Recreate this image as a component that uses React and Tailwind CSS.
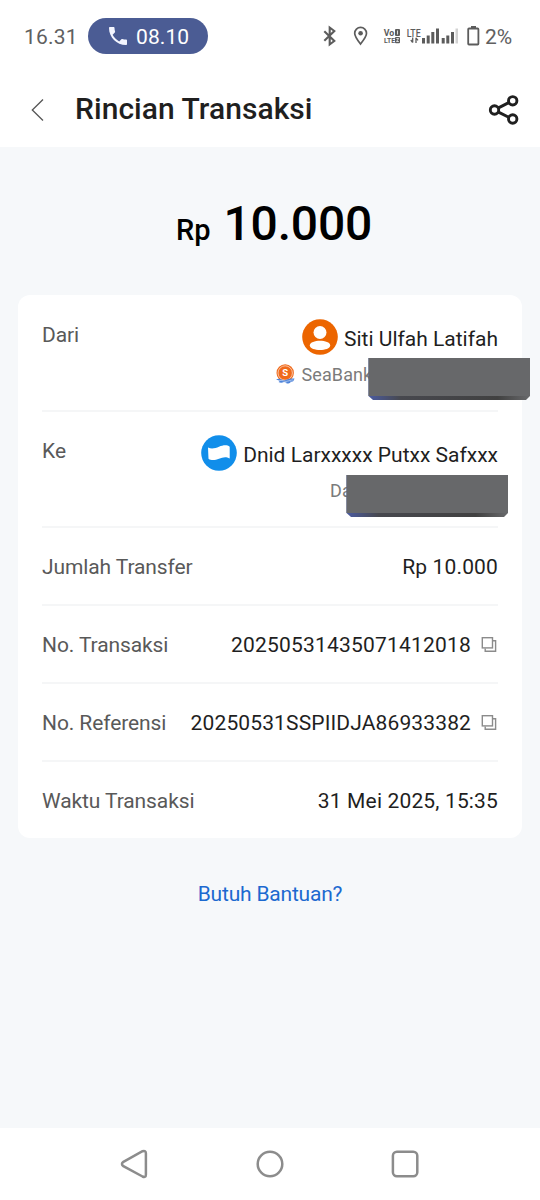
import React from "react";

const copyRows = [
  { label: "No. Transaksi", value: "20250531435071412018", tracking: "tracking-[0.2px]" },
  { label: "No. Referensi", value: "20250531SSPIIDJA86933382", tracking: "tracking-[0.13px]" },
];

function StatusIcons() {
  return (
    <svg width="160" height="28" viewBox="320 22 160 28" fill="none">
      {/* Bluetooth */}
      <path d="M324.300 31.200L334.300 41L329.700 44.500V27.500L334.300 31L324.300 40.800" stroke="#5c5c5c" strokeWidth="2.100" />
      {/* Location */}
      <path d="M360.500 44C357 39.500 354.700 36.500 354.700 33.200A5.900 5.900 0 0 1 366.500 33.200C366.500 36.500 364 39.500 360.500 44Z" stroke="#5c5c5c" strokeWidth="1.700" />
      <circle cx="360.600" cy="33.200" r="2.300" fill="#5c5c5c" />
      {/* VoLTE */}
      <g fill="#5c5c5c" fontFamily="Roboto, sans-serif" fontWeight="700">
        <text x="383.800" y="35.500" fontSize="8.500" textLength="10.500" lengthAdjust="spacingAndGlyphs">Vo</text>
        <text x="384" y="43.200" fontSize="8" textLength="11" lengthAdjust="spacingAndGlyphs">LTE</text>
        <rect x="395" y="29" width="5" height="7" rx="1" />
        <rect x="395" y="37" width="5" height="6.300" rx="1" />
        <text x="406.700" y="36.500" fontSize="10" fontWeight="500" textLength="14" lengthAdjust="spacingAndGlyphs">LTE</text>
      </g>
      <path d="M397.500 30.500V34.500M396.400 38.500H398.600L396.600 41.500H398.800" stroke="#fff" strokeWidth=".8" />
      <path d="M412.700 42.500V37.500M410.800 40L412.700 42.500M416 43V37.800M416 37.800L418 40.300" stroke="#5c5c5c" strokeWidth="1.300" />
      {/* Signal */}
      <path d="M422 38H425V43.500H422ZM426.700 35.500H429.700V43.500H426.700ZM431.300 32H434.300V43.500H431.300ZM436 28.500H439V43.500H436ZM441.700 38H444.700V43.500H441.700ZM446.300 35.500H449.300V43.500H446.300ZM451 32H454V43.500H451Z" fill="#5c5c5c" />
      <path d="M455.500 28.500H458V43.500H455.500Z" fill="#d2d2d2" />
      {/* Battery */}
      <path d="M471 26H476V28H471Z" fill="#5c5c5c" />
      <rect x="468.200" y="28.500" width="10.200" height="16" rx=".8" stroke="#5c5c5c" strokeWidth="1.800" />
    </svg>
  );
}

function CopyIcon() {
  return (
    <svg className="ml-[10px] mr-px shrink-0 -mt-[2px]" width="16" height="16" viewBox="0 0 16 16" fill="none" stroke="#8b8b8b" strokeWidth="1.400">
      <rect x="1.300" y=".7" width="10.200" height="10.200" />
      <path d="M12 3.700H14.600V14.300H4.200V11.500" />
    </svg>
  );
}

function UserIcon() {
  return (
    <svg width="36" height="36" viewBox="0 0 36 36">
      <circle cx="18" cy="18" r="17.800" fill="#ec6500" />
      <circle cx="18" cy="13.500" r="6.500" fill="#fff" />
      <path d="M7.800 26.500C8 20.300 28 20.300 28.200 26.500C28 32.500 8 32.500 7.800 26.500Z" fill="#fff" />
    </svg>
  );
}

function DanaIcon() {
  return (
    <svg width="36" height="36" viewBox="0 0 36 36">
      <circle cx="18" cy="18" r="17.800" fill="#118eea" />
      <path d="M7 12.500C11 14.500 14.500 13 18 11.700C22 10.200 26 9.500 28.700 11.800V23.500C24.500 21 21.500 22.500 18 23.800C14.500 25 10.500 26 7.500 23.700Z" fill="#fff" />
    </svg>
  );
}

function SeaBankIcon() {
  return (
    <svg className="mr-[7px]" width="19" height="20" viewBox="0 0 19 20">
      <circle cx="9.200" cy="9" r="8.700" fill="#f06a1b" />
      <circle cx="9.200" cy="9" r="7.200" fill="none" stroke="#fff" strokeWidth=".6" />
      <text x="9.200" y="12.300" textAnchor="middle" fill="#fff" fontFamily="Roboto, sans-serif" fontWeight="700" fontSize="9.500">S</text>
      <path d="M0 15.500Q3 14 5.500 15.500T11 15.500T18.500 14.500L17.500 17Q16 18 14.500 17.500Q15 19.500 10.500 19.500Q11 18 8 18Q5 19.500 2.500 18Q4 17.500 3 16.500Z" fill="#4d83d9" />
      <path d="M3 16.800Q5 15.800 7.500 16.900T13 16.800T17.500 16" fill="none" stroke="#fff" strokeWidth=".5" />
    </svg>
  );
}

function Redacted({ className }) {
  return (
    <div className={`absolute h-[42px] w-[162px] ${className}`}>
      <svg width="162" height="42" viewBox="0 0 162 42">
        <defs>
          <linearGradient id="edge" x1="0" x2="1" y1="0" y2="0">
            <stop offset="0" stopColor="#4b5ba0" />
            <stop offset=".2" stopColor="#47484e" />
            <stop offset=".8" stopColor="#414141" />
            <stop offset="1" stopColor="#68696b" />
          </linearGradient>
        </defs>
        <path d="M0.500 0H162V38L158 42H5L0.500 38Z" fill="url(#edge)" />
        <path d="M0.500 0H162V38H0.500Z" fill="#67686a" />
      </svg>
    </div>
  );
}

function Row({ label, tracking = "tracking-[0.15px]", children }) {
  return (
    <div className="flex h-[78px] items-center justify-between border-b-2 border-[#f5f6f7] pt-1 last:h-[76px] last:border-b-0">
      <span className="text-[21px] tracking-[-0.1px] text-[#595959]">{label}</span>
      <div className={`flex items-center text-[21px] ${tracking}`}>{children}</div>
    </div>
  );
}

export default function App() {
  return (
    <div className="flex h-[1200px] w-[540px] flex-col overflow-hidden bg-[#f6f8fa] font-['Roboto',sans-serif] text-[#1f1f1f]">
      {/* Status bar */}
      <div className="flex h-[72px] shrink-0 items-center bg-white pl-6 text-[#606060]">
        <span className="w-16 pt-[3px] text-[21px] tracking-[0.2px]">16.31</span>
        <div className="flex h-9 w-[120px] items-center rounded-full bg-[#4b5c94] pl-[18px] text-white">
          <svg width="24" height="24" viewBox="0 0 24 24" fill="#f3f5ff">
            <path d="M6.620 10.790c1.440 2.830 3.760 5.140 6.590 6.590l2.200-2.200c.27-.27.67-.36 1.020-.24 1.120.37 2.330.57 3.570.57.55 0 1 .45 1 1V20c0 .55-.45 1-1 1C10.610 21 3 13.390 3 4c0-.55.45-1 1-1h3.500c.55 0 1 .45 1 1 0 1.250.2 2.450.57 3.570.11.35.03.74-.25 1.020z" />
          </svg>
          <span className="ml-[6px] pt-[3px] text-[21px] tracking-[0.1px]">08.10</span>
        </div>
        <div className="ml-[112px] w-[160px]">
          <StatusIcons />
        </div>
        <span className="ml-[5px] pt-[3px] text-[21px]">2%</span>
      </div>

      {/* Header */}
      <div className="flex h-[75px] shrink-0 items-center bg-white pl-[31px] pr-5">
        <svg width="14" height="24" viewBox="0 0 14 24" fill="none" stroke="#555" strokeWidth="1.300">
          <path d="M12 1.500L1.300 12L12 22.500" />
        </svg>
        <h1 className="ml-[30px] flex-1 pb-[2px] text-[30px] font-medium tracking-[0.05px]">Rincian Transaksi</h1>
        <svg width="32" height="32" viewBox="0 0 32 32" fill="none" stroke="#202020" strokeWidth="2.900">
          <circle cx="6.500" cy="16" r="4.200" />
          <circle cx="24.700" cy="6.800" r="4.200" />
          <circle cx="24.700" cy="25" r="4.200" />
          <path d="M10.500 13.900L20.700 8.600M10.500 18.100L20.700 23.200" />
        </svg>
      </div>

      {/* Amount */}
      <div className="flex h-[148px] shrink-0 items-baseline justify-center pl-2 pt-[41px] font-medium text-black">
        <span className="text-[29px]">Rp</span>
        <span className="ml-[13px] text-[48px] tracking-[-0.2px]">10.000</span>
      </div>

      {/* Details */}
      <div className="mx-[18px] h-[543px] shrink-0 rounded-xl bg-white px-6">
        <div className="relative flex h-[117px] justify-between border-b-2 border-[#f5f6f7] pt-6">
          <span className="pt-px text-[21px] leading-[30px] tracking-[-0.1px] text-[#595959]">Dari</span>
          <div className="flex flex-col">
            <div className="flex h-9 items-center justify-end">
              <UserIcon />
              <span className="ml-[6px] pt-[5px] text-[21px]">Siti Ulfah Latifah</span>
            </div>
            <div className="flex h-[38px] w-[222.500px] items-center text-[18px] tracking-[0.1px] text-[#7b7b7b]">
              <SeaBankIcon />
              SeaBank
            </div>
          </div>
          <Redacted className="-right-8 top-[63px]" />
        </div>

        <div className="relative flex h-[116px] justify-between border-b-2 border-[#f5f6f7] pt-[23px]">
          <span className="pt-px text-[21px] leading-[30px] text-[#595959]">Ke</span>
          <div className="flex flex-col items-end">
            <div className="flex h-9 items-center">
              <DanaIcon />
              <span className="ml-[6px] pt-[5px] text-[21px]">Dnid Larxxxxx Putxx Safxxx</span>
            </div>
            <div className="flex h-[38px] w-[168px] items-center text-[18px] tracking-[0.2px] text-[#7b7b7b]">Da</div>
          </div>
          <Redacted className="-right-[10px] top-[63px]" />
        </div>

        <Row label="Jumlah Transfer">Rp 10.000</Row>
        {copyRows.map((row) => (
          <Row key={row.label} label={row.label} tracking={row.tracking}>
            {row.value}
            <CopyIcon />
          </Row>
        ))}
        <Row label="Waktu Transaksi">31 Mei 2025, 15:35</Row>
      </div>

      {/* Help */}
      <button className="mt-[41px] text-[21px] leading-[30px] tracking-[-0.2px] text-[#1c69d0]">Butuh Bantuan?</button>

      {/* Navigation bar */}
      <div className="mt-auto flex h-[72px] shrink-0 items-center justify-center gap-[105px] bg-white">
        <svg width="30" height="30" viewBox="0 0 30 30" fill="none" stroke="#8c8c8c" strokeWidth="2.500">
          <path d="M3.400 12.800L22.500 2.200Q25.900 1 25.900 4.500V25.500Q25.900 29 22.500 27.500L3.400 17.200Q0.500 15 3.400 12.800Z" />
        </svg>
        <svg width="30" height="30" viewBox="0 0 30 30" fill="none" stroke="#8c8c8c" strokeWidth="2.500">
          <circle cx="15" cy="15" r="12.300" />
        </svg>
        <svg width="30" height="30" viewBox="0 0 30 30" fill="none" stroke="#8c8c8c" strokeWidth="2.500">
          <rect x="2.900" y="2.700" width="24.400" height="24.600" rx="4" />
        </svg>
      </div>
    </div>
  );
}
